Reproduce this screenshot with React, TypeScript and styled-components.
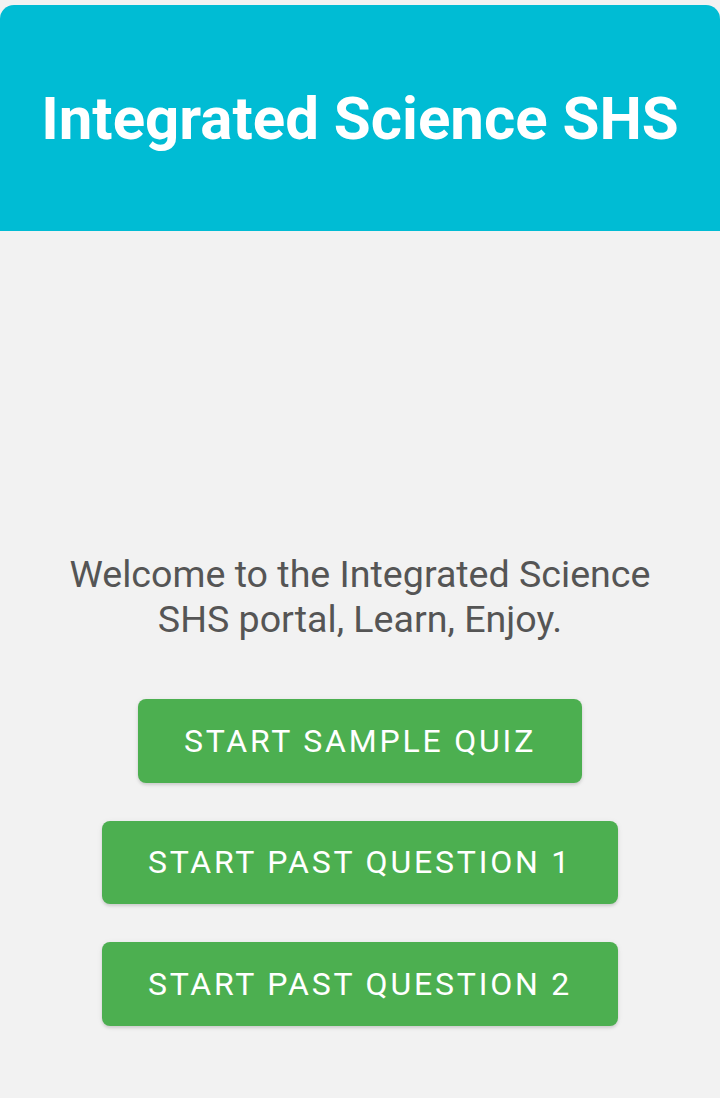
import styled, { createGlobalStyle } from 'styled-components'

const Global = createGlobalStyle`
  html, body {
    margin: 0;
    padding: 0;
    background: #f2f2f2;
  }
  body {
    font-family: Roboto, "Noto Sans", sans-serif;
  }
`

const Page = styled.main`
  min-height: 1098px;
  padding-top: 5px;
  box-sizing: border-box;
  background: #f2f2f2;
`

const Header = styled.header`
  display: flex;
  align-items: center;
  justify-content: center;
  height: 226px;
  background: #00bcd4;
  border-radius: 14px 14px 0 0;
`

const Title = styled.h1`
  margin: 0;
  font-size: 60px;
  font-weight: 700;
  color: #fff;
`

const Content = styled.section`
  display: flex;
  flex-direction: column;
  align-items: center;
  padding: 321px 30px 0;
`

const Welcome = styled.p`
  margin: 0 0 57px;
  font-size: 37.6px;
  line-height: 45px;
  color: #555;
  text-align: center;
`

const Buttons = styled.div`
  display: flex;
  flex-direction: column;
  align-items: center;
  gap: 38px;
`

const Button = styled.button`
  height: 83.5px;
  padding: 0 46px;
  font-family: Roboto, sans-serif;
  font-size: 32px;
  font-weight: 400;
  letter-spacing: 2.8px;
  text-transform: uppercase;
  color: #fff;
  background: #4caf50;
  border: none;
  border-radius: 8px;
  box-shadow:
    0 2px 3px rgb(0 0 0 / 0.12),
    0 1px 6px rgb(0 0 0 / 0.06);
`

export default function App() {
  return (
    <>
      <Global />
      <Page>
        <Header>
          <Title>Integrated Science SHS</Title>
        </Header>
        <Content>
          <Welcome>
            Welcome to the Integrated Science
            <br />
            SHS portal, Learn, Enjoy.
          </Welcome>
          <Buttons>
            <Button>Start Sample Quiz</Button>
            <Button>Start Past Question 1</Button>
            <Button>Start Past Question 2</Button>
          </Buttons>
        </Content>
      </Page>
    </>
  )
}
